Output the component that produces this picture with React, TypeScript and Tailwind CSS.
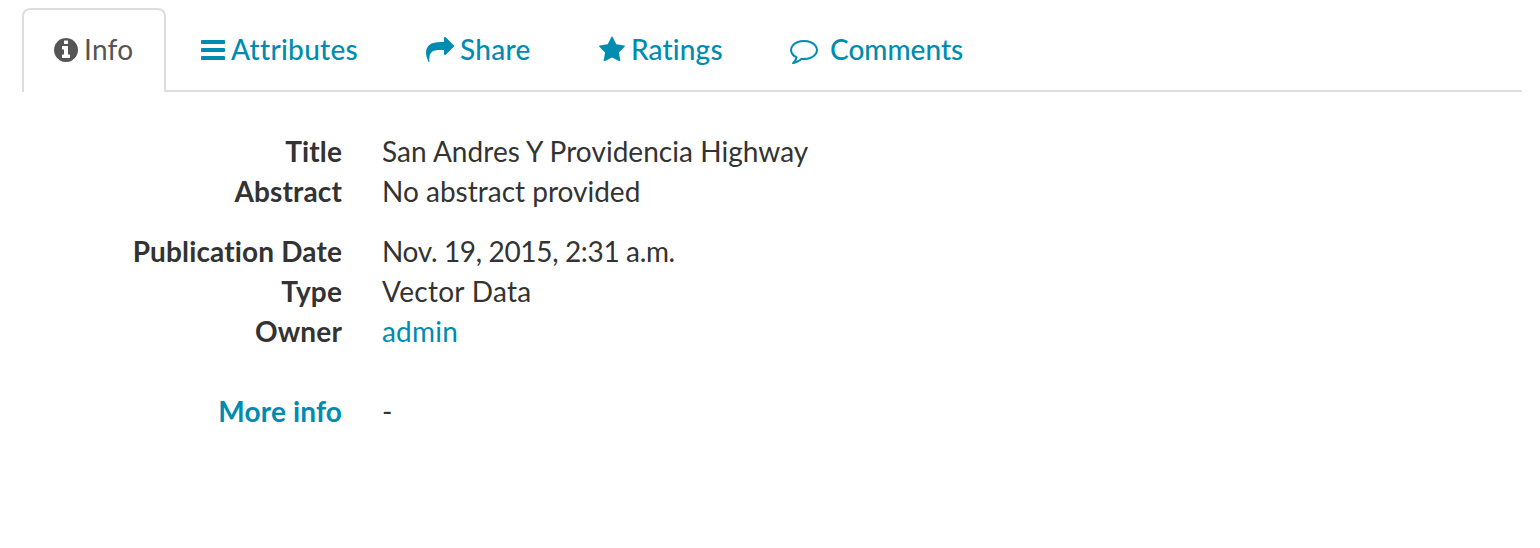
import type { ReactNode } from "react";

const Icon = ({ d, w, className }: { d: string; w: number; className: string }) => (
  <svg viewBox={`0 0 ${w} 1792`} className={className} fill="currentColor" aria-hidden="true">
    <path d={d} />
  </svg>
);

const INFO = "M1024 1376v-160q0-14-9-23t-23-9h-96v-512q0-14-9-23t-23-9h-320q-14 0-23 9t-9 23v160q0 14 9 23t23 9h96v320h-96q-14 0-23 9t-9 23v160q0 14 9 23t23 9h448q14 0 23-9t9-23zm-128-896v-160q0-14-9-23t-23-9h-192q-14 0-23 9t-9 23v160q0 14 9 23t23 9h192q14 0 23-9t9-23zm640 416q0 209-103 385.500t-279.500 279.500-385.500 103-385.500-103-279.500-279.500-103-385.500 103-385.500 279.500-279.500 385.500-103 385.500 103 279.500 279.500 103 385.500z";
const BARS = "M1536 1344v128q0 26-19 45t-45 19h-1408q-26 0-45-19t-19-45v-128q0-26 19-45t45-19h1408q26 0 45 19t19 45zm0-512v128q0 26-19 45t-45 19h-1408q-26 0-45-19t-19-45v-128q0-26 19-45t45-19h1408q26 0 45 19t19 45zm0-512v128q0 26-19 45t-45 19h-1408q-26 0-45-19t-19-45v-128q0-26 19-45t45-19h1408q26 0 45 19t19 45z";
const SHARE = "M1792 640q0 26-19 45l-512 512q-19 19-45 19t-45-19-19-45v-256h-224q-98 0-175.500 6t-154 21.500-133 42.500-105.500 69.500-80 101-48.500 138.500-17.500 181q0 55 5 123 0 6 2.500 23.500t2.500 26.500q0 15-8.500 25t-23.500 10q-16 0-28-17-7-9-13-22t-13.500-30-10.500-24q-127-285-127-451 0-199 53-333 162-403 875-403h224v-256q0-26 19-45t45-19 45 19l512 512q19 19 19 45z";
const STAR = "M1664 647q0 22-26 48l-363 354 86 500q1 7 1 20 0 21-10.500 35.500t-30.500 14.500q-19 0-40-12l-449-236-449 236q-22 12-40 12-21 0-31.500-14.500t-10.500-35.500q0-6 2-20l86-500-364-354q-25-27-25-48 0-37 56-46l502-73 225-455q19-41 49-41t49 41l225 455 502 73q56 9 56 46z";
const COMMENT = "M896 384q-204 0-381.500 69.500t-282 187.500-104.500 255q0 112 71.500 213.500t201.500 175.500l87 50-27 96q-24 91-70 172 152-63 275-171l43-38 57 6q69 8 130 8 204 0 381.500-69.500t282-187.500 104.500-255-104.500-255-282-187.500-381.500-69.500zm896 512q0 174-120 321.500t-326 233-450 85.500q-70 0-145-8-198 175-460 242-49 14-114 22h-5q-15 0-27-10.500t-16-27.500v-1q-3-4-.5-12t2-10 4.500-9.500l6-9 7-8.500 8-9q7-8 31-34.500t34.500-38 31-39.500 32.500-51 27-59 26-76q-157-89-247.500-220t-90.500-281q0-174 120-321.500t326-233 450-85.500 450 85.500 326 233 120 321.500z";

function Tab({ icon, className, children }: { icon: ReactNode; className: string; children: ReactNode }) {
  return (
    <li className={className}>
      <a href="#" className="flex h-[82px] items-center font-medium text-[#008cb0]">
        {icon}
        {children}
      </a>
    </li>
  );
}

function Row({ term, children, className = "" }: { term: ReactNode; children: ReactNode; className?: string }) {
  return (
    <div className={`flex h-10 leading-10 ${className}`}>
      <dt className="w-[320px] text-right font-bold tracking-[0.15px]">{term}</dt>
      <dd className="ml-10">{children}</dd>
    </div>
  );
}

export default function App() {
  return (
    <main className="h-[548px] overflow-hidden bg-white pl-[22px] pr-[18px] pt-2 font-[Lato,sans-serif] text-[28px] text-[#333333] [font-variant-ligatures:none]">
      <ul className="flex h-[84px] whitespace-nowrap border-b-2 border-[#dddddd]">
        <li className="mr-[35px] flex h-[84px] w-[144px] items-center rounded-t-lg border-2 border-b-0 border-[#dddddd] bg-white pb-1 pl-[30px] tracking-[0.25px] text-[#555555]">
          <Icon d={INFO} w={1536} className="mr-[6px] mt-[2px] h-7 w-6" />
          Info
        </li>
        <Tab className="w-[225px] tracking-[0.3px]" icon={<Icon d={BARS} w={1536} className="mr-[6px] mt-[2px] h-7 w-6" />}>Attributes</Tab>
        <Tab className="w-[172.5px] tracking-[0.25px]" icon={<Icon d={SHARE} w={1792} className="mr-[6px] mt-[2px] h-7 w-7" />}>Share</Tab>
        <Tab className="w-[191.5px] tracking-[0.15px]" icon={<Icon d={STAR} w={1664} className="mr-[6.5px] mt-[2px] h-7 w-[26px]" />}>Ratings</Tab>
        <Tab className="w-[180px]" icon={<Icon d={COMMENT} w={1792} className="mr-3 mt-[2px] h-7 w-7" />}>Comments</Tab>
      </ul>
      <dl className="pt-[39px]">
        <Row term="Title"><span className="tracking-[0.04px]">San Andres Y Providencia Highway</span></Row>
        <Row term="Abstract">No abstract provided</Row>
        <Row term="Publication Date" className="mt-5">
          <span className="tracking-[-0.35px]">Nov. 19, 2015, 2:31 a.m.</span>
        </Row>
        <Row term="Type"><span className="tracking-[0.3px]">Vector Data</span></Row>
        <Row term="Owner"><a href="#" className="tracking-[0.2px] text-[#008cb0]">admin</a></Row>
        <Row term={<a href="#" className="text-[#008cb0]">More info</a>} className="mt-10">-</Row>
      </dl>
    </main>
  );
}
